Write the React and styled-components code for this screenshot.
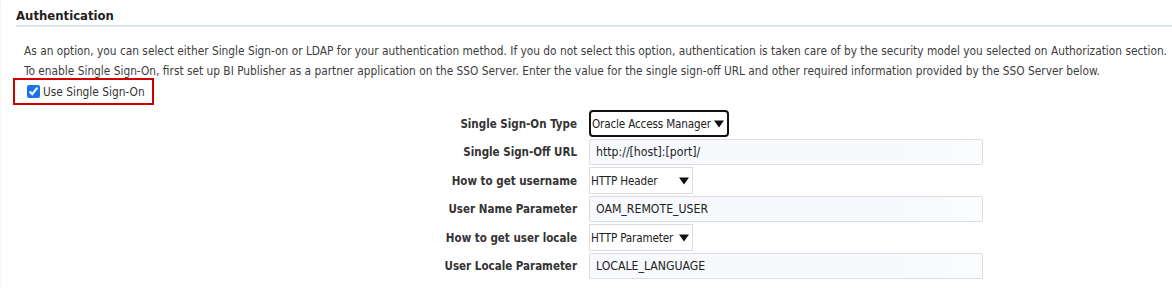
import React from 'react'
import styled, { createGlobalStyle } from 'styled-components'

const GlobalStyle = createGlobalStyle`
  html, body {
    margin: 0;
    padding: 0;
    background: #ffffff;
  }
  body {
    font-family: "DejaVu Sans Condensed", "Liberation Sans", Arial, sans-serif;
    color: #333333;
  }
`

const Page = styled.div`
  width: 1172px;
  height: 288px;
  box-sizing: border-box;
  padding: 8px 0 0 15px;
  border-left: 1px dotted #ececec;
  overflow: hidden;
`

const Heading = styled.h2`
  margin: 0;
  font-size: 13px;
  font-weight: bold;
  color: #1f1f1f;
  line-height: 16px;
  padding-bottom: 1px;
  border-bottom: 2px solid #dfe5ec;
`

const Intro = styled.p`
  margin: 14px 0 0 8px;
  font-size: 11.8px;
  line-height: 20px;
  color: #3d3d3d;
  white-space: nowrap;
`

const SsoToggle = styled.label`
  display: inline-flex;
  align-items: center;
  gap: 3px;
  margin: -3px 0 0 -3px;
  height: 23px;
  padding: 0 7px 0 12px;
  border: 2px solid #d00000;
  font-size: 11.8px;
  color: #333333;

  input {
    margin: 0;
    width: 13px;
    height: 13px;
    accent-color: #1a73e8;
  }
`

const Form = styled.div`
  display: grid;
  grid-template-columns: 561px 394px;
  column-gap: 12px;
  row-gap: 2px;
  margin-top: 5px;
`

const Label = styled.div`
  display: flex;
  align-items: center;
  justify-content: flex-end;
  font-size: 11.5px;
  font-weight: bold;
  color: #333333;
  white-space: nowrap;
`

const Select = styled.div`
  display: flex;
  align-items: center;
  justify-content: space-between;
  box-sizing: border-box;
  width: ${({ w }) => w}px;
  height: 27px;
  padding: 0 3px 0 1px;
  background: #ffffff;
  font-size: 11.6px;
  letter-spacing: -0.15px;
  white-space: nowrap;
  color: #222222;
  border: ${({ focused }) => (focused ? '2px solid #111111' : '1px solid #dcdcdc')};
  border-radius: ${({ focused }) => (focused ? '4px' : '0')};

  svg {
    flex-shrink: 0;
  }
`

const Input = styled.div`
  display: flex;
  align-items: center;
  box-sizing: border-box;
  height: 26px;
  padding: 0 6px;
  background: linear-gradient(to right, #f7f9fc 80%, #fbfcfd);
  border: 1px solid #dadde1;
  border-radius: 2px;
  font-size: 12.2px;
  white-space: nowrap;
  color: #222222;
`

const Arrow = () => (
  <svg width="10" height="8" viewBox="0 0 10 8">
    <path d="M0 0.5 L10 0.5 L5 7.5 Z" fill="#111111" />
  </svg>
)

const rows = [
  { label: 'Single Sign-On Type', kind: 'select', value: 'Oracle Access Manager', w: 140, focused: true },
  { label: 'Single Sign-Off URL', kind: 'input', value: 'http://[host]:[port]/' },
  { label: 'How to get username', kind: 'select', value: 'HTTP Header', w: 104 },
  { label: 'User Name Parameter', kind: 'input', value: 'OAM_REMOTE_USER' },
  { label: 'How to get user locale', kind: 'select', value: 'HTTP Parameter', w: 104 },
  { label: 'User Locale Parameter', kind: 'input', value: 'LOCALE_LANGUAGE' },
]

const App = () => {
  return (
    <>
      <GlobalStyle />
      <Page>
        <Heading>Authentication</Heading>
        <Intro>
          As an option, you can select either Single Sign-on or LDAP for your authentication method. If you do not select this option, authentication is taken care of by the security model you selected on Authorization section.
          <br />
          To enable Single Sign-On, first set up BI Publisher as a partner application on the SSO Server. Enter the value for the single sign-off URL and other required information provided by the SSO Server below.
        </Intro>
        <SsoToggle>
          <input type="checkbox" checked readOnly />
          Use Single Sign-On
        </SsoToggle>
        <Form>
          {rows.map((row) => (
            <React.Fragment key={row.label}>
              <Label>{row.label}</Label>
              <div>
                {row.kind === 'select' ? (
                  <Select w={row.w} focused={row.focused}>
                    {row.value}
                    <Arrow />
                  </Select>
                ) : (
                  <Input>{row.value}</Input>
                )}
              </div>
            </React.Fragment>
          ))}
        </Form>
      </Page>
    </>
  )
}

export default App
